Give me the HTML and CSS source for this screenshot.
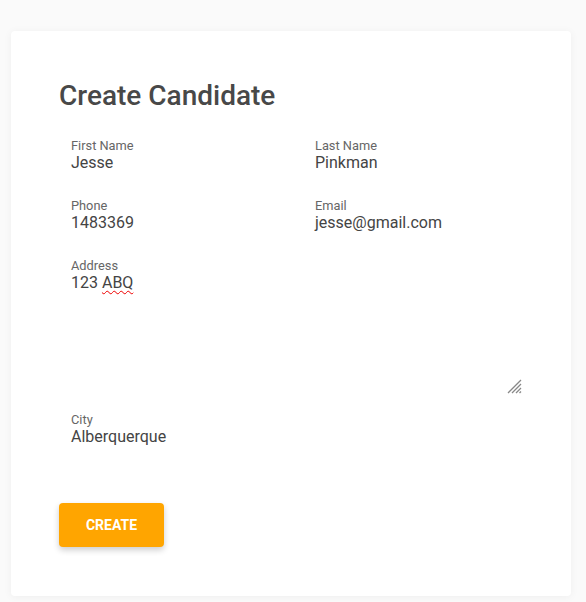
FILE: index.html
```html
<!DOCTYPE html>
<html>
<head>
<meta charset="utf-8">
<link rel="stylesheet" href="styles.css">
</head>
<body>
<div class="card">
  <h1 class="title">Create Candidate</h1>
  <form class="form">
    <div class="grid">
      <div class="field">
        <label class="label">First Name</label>
        <div class="value">Jesse</div>
      </div>
      <div class="field">
        <label class="label">Last Name</label>
        <div class="value">Pinkman</div>
      </div>
      <div class="field">
        <label class="label">Phone</label>
        <div class="value">1483369</div>
      </div>
      <div class="field">
        <label class="label">Email</label>
        <div class="value">jesse@gmail.com</div>
      </div>
    </div>
    <div class="field area">
      <label class="label">Address</label>
      <div class="value">123 <span class="spell">ABQ</span></div>
      <svg class="grip" width="15" height="15" viewBox="0 0 15 15">
        <path d="M14 1 L1 14 M14 5 L5 14 M14 9 L9 14 M14 12.5 L12.5 14" stroke="#888" stroke-width="1.3" fill="none"/>
      </svg>
    </div>
    <div class="field">
      <label class="label">City</label>
      <div class="value">Alberquerque</div>
    </div>
    <button type="button" class="btn">CREATE</button>
  </form>
</div>
</body>
</html>
```
FILE: styles.css
```css
html, body {
  margin: 0;
  padding: 0;
  background: #fafafa;
}
body {
  font-family: Roboto, "Liberation Sans", sans-serif;
  padding: 31px 15px 6px 11px;
}
.card {
  background: #fff;
  border-radius: 4px;
  box-shadow: 0 1px 8px rgba(0,0,0,0.05);
  height: 565px;
  box-sizing: border-box;
  padding: 49px 48px 0 48px;
}
.title {
  margin: 0;
  font-size: 28px;
  line-height: 32px;
  font-weight: 500;
  color: #484848;
}
.form {
  padding: 0 12px;
  margin-top: 26px;
}
.grid {
  display: grid;
  grid-template-columns: 220px 220px;
  column-gap: 24px;
  row-gap: 0;
}
.field {
  height: 60px;
  display: flex;
  flex-direction: column;
}
.label {
  font-size: 12.8px;
  line-height: 15px;
  color: #666;
}
.value {
  font-size: 16px;
  line-height: 19px;
  color: #444;
}
.spell {
  text-decoration: underline wavy #e00;
  text-decoration-thickness: 1px;
  text-underline-offset: 2px;
}
.area {
  position: relative;
  height: 154px;
  width: 452px;
}
.grip {
  position: absolute;
  right: 1px;
  bottom: 18px;
}
.btn {
  margin-top: 31px;
  margin-left: -12px;
  width: 105px;
  height: 44px;
  border: none;
  border-radius: 4px;
  background: #ffa500;
  color: #fff;
  font-family: Roboto, "Liberation Sans", sans-serif;
  font-weight: 700;
  font-size: 14px;
  box-shadow: 0 3px 6px rgba(0,0,0,0.2);
  cursor: pointer;
}
```
